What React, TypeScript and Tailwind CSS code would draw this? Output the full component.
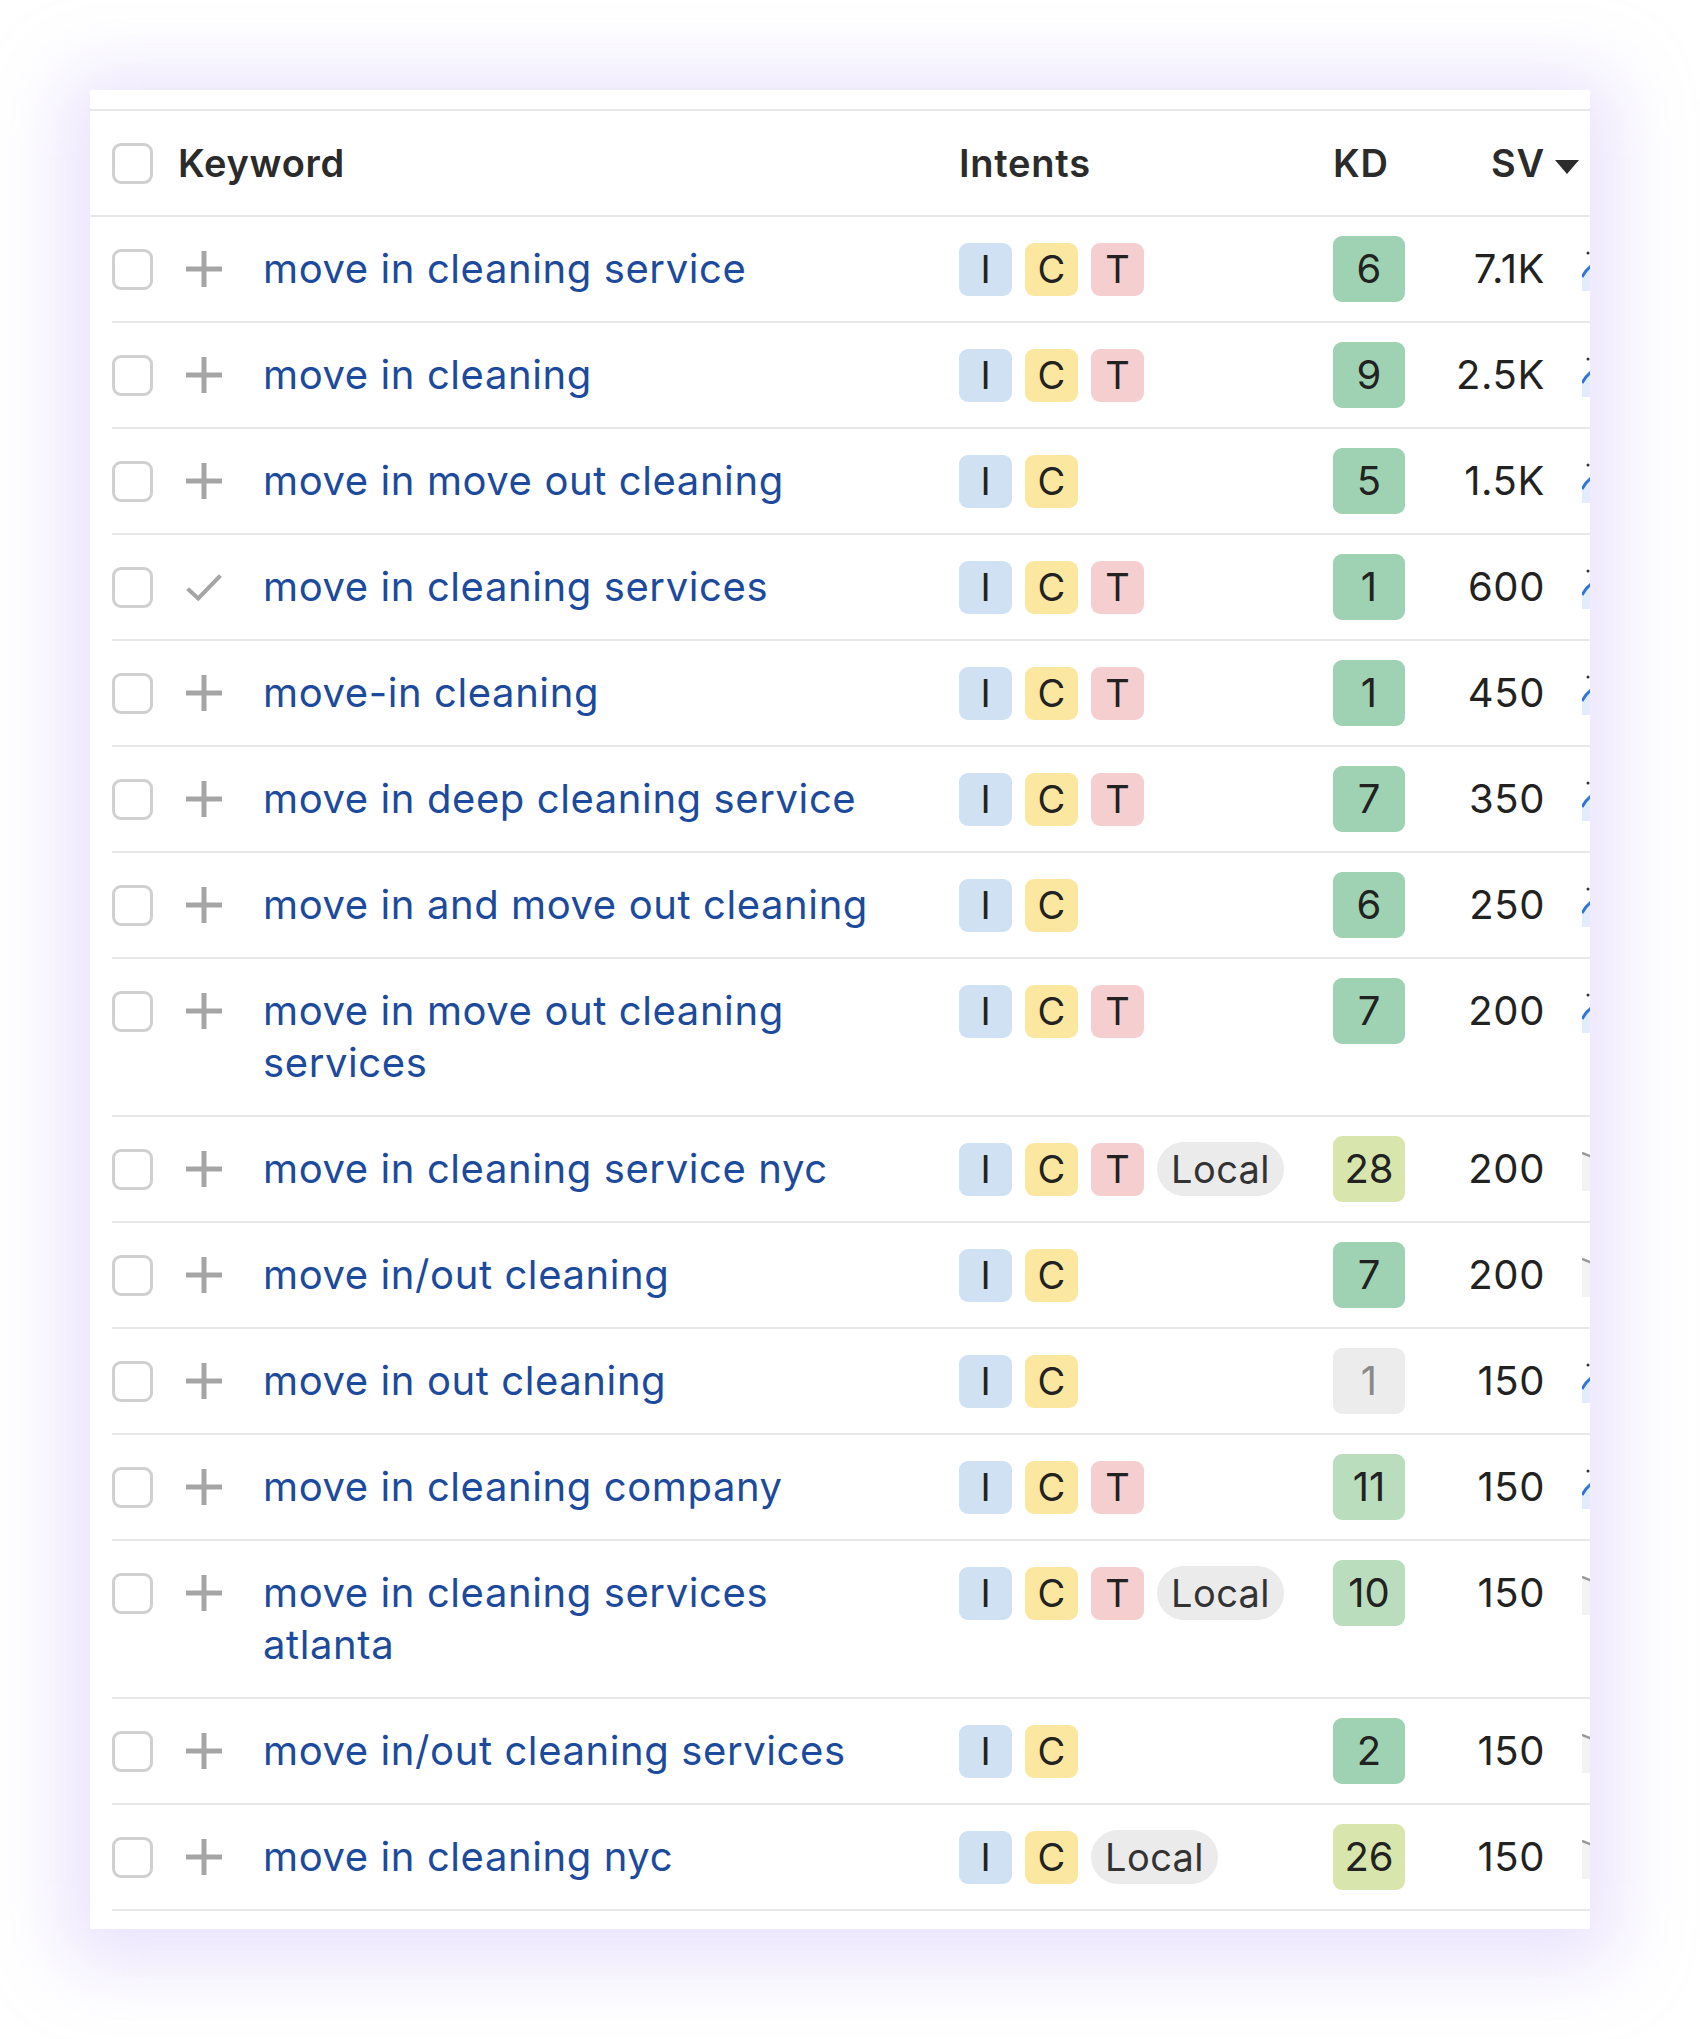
import React from "react";

type Row = {
  keyword: string;
  intents: string[];
  local?: boolean;
  kd: number;
  sv: string;
  added?: boolean;
  trend: "blue" | "gray";
};

const rows: Row[] = [
  { keyword: "move in cleaning service", intents: ["I", "C", "T"], kd: 6, sv: "7.1K", trend: "blue" },
  { keyword: "move in cleaning", intents: ["I", "C", "T"], kd: 9, sv: "2.5K", trend: "blue" },
  { keyword: "move in move out cleaning", intents: ["I", "C"], kd: 5, sv: "1.5K", trend: "blue" },
  { keyword: "move in cleaning services", intents: ["I", "C", "T"], kd: 1, sv: "600", added: true, trend: "blue" },
  { keyword: "move-in cleaning", intents: ["I", "C", "T"], kd: 1, sv: "450", trend: "blue" },
  { keyword: "move in deep cleaning service", intents: ["I", "C", "T"], kd: 7, sv: "350", trend: "blue" },
  { keyword: "move in and move out cleaning", intents: ["I", "C"], kd: 6, sv: "250", trend: "blue" },
  { keyword: "move in move out cleaning services", intents: ["I", "C", "T"], kd: 7, sv: "200", trend: "blue" },
  { keyword: "move in cleaning service nyc", intents: ["I", "C", "T"], local: true, kd: 28, sv: "200", trend: "gray" },
  { keyword: "move in/out cleaning", intents: ["I", "C"], kd: 7, sv: "200", trend: "gray" },
  { keyword: "move in out cleaning", intents: ["I", "C"], kd: -1, sv: "150", trend: "blue" },
  { keyword: "move in cleaning company", intents: ["I", "C", "T"], kd: 11, sv: "150", trend: "blue" },
  { keyword: "move in cleaning services atlanta", intents: ["I", "C", "T"], local: true, kd: 10, sv: "150", trend: "gray" },
  { keyword: "move in/out cleaning services", intents: ["I", "C"], kd: 2, sv: "150", trend: "gray" },
  { keyword: "move in cleaning nyc", intents: ["I", "C"], local: true, kd: 26, sv: "150", trend: "gray" },
];

const intentColor: Record<string, string> = {
  I: "bg-[#cfe1f3]",
  C: "bg-[#fbe7a0]",
  T: "bg-[#f5cfcf]",
};

function Checkbox() {
  return <div className="h-[41px] w-[41px] shrink-0 rounded-[9px] border-[3px] border-[#d0d0d0] bg-white" />;
}

function PlusIcon() {
  return (
    <svg width="36" height="36" viewBox="0 0 36 36">
      <rect x="15.5" y="0" width="5" height="36" fill="#a5a5a5" />
      <rect x="0" y="15.5" width="36" height="5" fill="#a5a5a5" />
    </svg>
  );
}

function CheckIcon() {
  return (
    <svg width="44" height="34" viewBox="0 0 44 34">
      <polyline points="2,19 15,31 42,3" fill="none" stroke="#a5a5a5" strokeWidth="5" />
    </svg>
  );
}

function KdBox({ kd }: { kd: number }) {
  let cls = "bg-[#9fd2b2] text-[#222]";
  if (kd < 0) cls = "bg-[#ececec] text-[#8a8a8a]";
  else if (kd >= 20) cls = "bg-[#d8e6ae] text-[#222]";
  else if (kd >= 10) cls = "bg-[#b9ddbd] text-[#222]";
  return (
    <div className={`flex h-[66px] w-[72px] shrink-0 items-center justify-center rounded-[9px] ${cls}`}>
      {kd < 0 ? 1 : kd}
    </div>
  );
}

function Trend({ color }: { color: "blue" | "gray" }) {
  if (color === "gray") {
    return (
      <svg width="80" height="44" viewBox="0 0 80 44">
        <rect x="0" y="8" width="80" height="36" fill="#f3f3f3" />
        <polyline points="0,6 8,9 16,14 30,18 50,22 80,26" fill="none" stroke="#9a9a9a" strokeWidth="2.5" />
      </svg>
    );
  }
  return (
    <svg width="80" height="44" viewBox="0 0 80 44">
      <polygon points="0,30 4,24 10,18 24,18 40,10 60,16 80,8 80,44 0,44" fill="#e3ecfa" />
      <polyline points="0,30 4,24 10,18 24,18 40,10 60,16 80,8" fill="none" stroke="#2f76d9" strokeWidth="3" />
      <circle cx="6" cy="6" r="1.5" fill="#333" />
    </svg>
  );
}

export default function App() {
  return (
    <div
      className="min-h-[2039px] w-[1700px] bg-white p-[90px]"
      style={{ fontFamily: "Inter, 'Noto Sans', sans-serif" }}
    >
      <div className="h-[1839px] w-[1500px] overflow-hidden bg-white pt-[19px] shadow-[0_10px_70px_25px_rgba(196,180,246,0.38)]">
        {/* HEADER */}
        <div className="flex h-[108px] w-[1560px] items-center border-y-2 border-[#e8e8e8] pl-[22px] text-[38px] font-semibold tracking-[0.02em] text-[#2b2b2b]">
          <Checkbox />
          <div className="ml-[25px] w-[781px] shrink-0">Keyword</div>
          <div className="w-[374px] shrink-0">Intents</div>
          <div className="w-[72px] shrink-0">KD</div>
          <div className="flex w-[140px] shrink-0 justify-end">SV</div>
          <svg width="24" height="14" viewBox="0 0 24 14" className="ml-[10px] mt-[8px] shrink-0">
            <polygon points="0,0 24,0 12,14" fill="#2b2b2b" />
          </svg>
        </div>

        {/* ROWS */}
        {rows.map((r) => (
          <div
            key={r.keyword}
            className="ml-[22px] flex w-[1560px] items-start border-b-2 border-[#e8e8e8] py-[26px] text-[40px] leading-[52px] tracking-[0.015em] text-[#222]"
          >
            <div className="flex h-[52px] shrink-0 items-center">
              <Checkbox />
            </div>
            <div className="ml-[33px] flex h-[52px] w-[36px] shrink-0 items-center justify-center">
              {r.added ? <CheckIcon /> : <PlusIcon />}
            </div>
            <div className="ml-[41px] w-[696px] shrink-0 pr-[52px] text-[#1c4a9c]">{r.keyword}</div>
            <div className="flex h-[52px] w-[374px] shrink-0 items-center gap-[13px] text-[38px]">
              {r.intents.map((i) => (
                <div
                  key={i}
                  className={`flex h-[53px] w-[53px] shrink-0 items-center justify-center rounded-[9px] tracking-normal ${intentColor[i]}`}
                >
                  {i}
                </div>
              ))}
              {r.local && (
                <div className="flex h-[54px] w-[127px] shrink-0 items-center justify-center rounded-full bg-[#ebebeb] tracking-[0.01em] text-[#333]">
                  Local
                </div>
              )}
            </div>
            <div className="flex h-[52px] shrink-0 items-center tracking-normal">
              <KdBox kd={r.kd} />
            </div>
            <div className="w-[140px] shrink-0 text-right">{r.sv}</div>
            <div className="ml-[37px] flex h-[52px] shrink-0 items-center">
              <Trend color={r.trend} />
            </div>
          </div>
        ))}
      </div>
    </div>
  );
}
